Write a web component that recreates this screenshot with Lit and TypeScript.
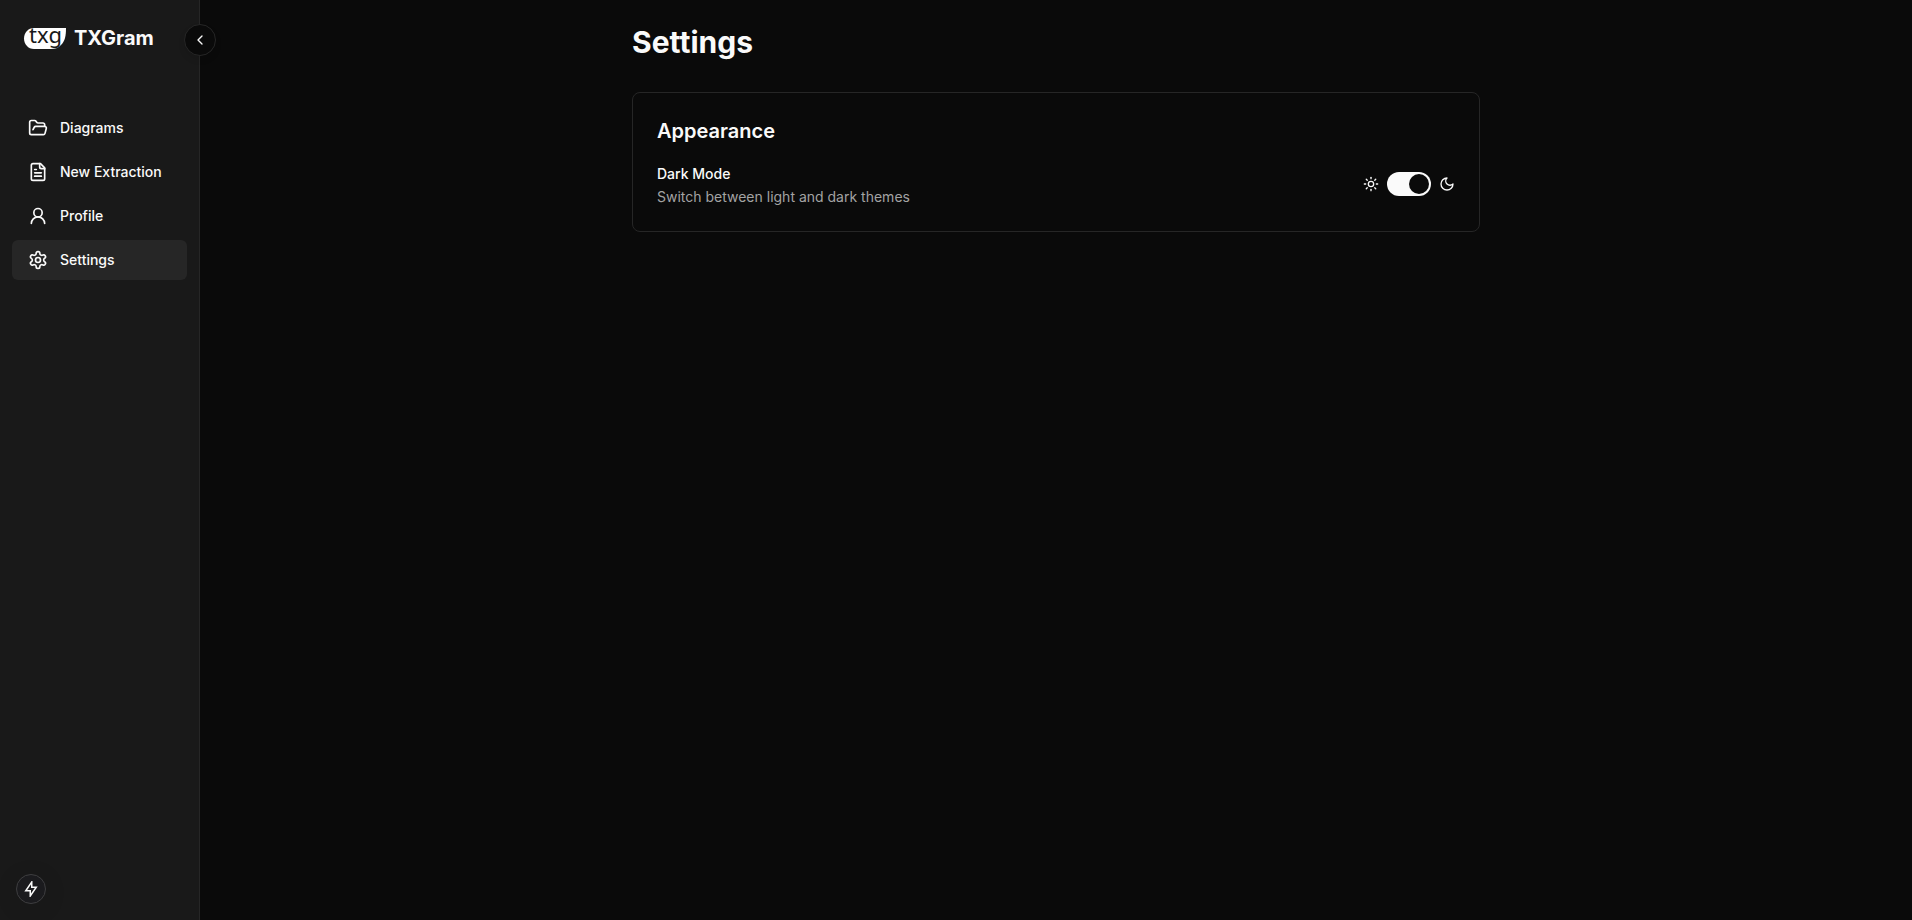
import { LitElement, html, svg, css } from "lit";
import { customElement, state } from "lit/decorators.js";
import { classMap } from "lit/directives/class-map.js";

const icons = {
  folder: svg`<path d="m6 14 1.5-2.9A2 2 0 0 1 9.24 10H20a2 2 0 0 1 1.94 2.5l-1.54 6a2 2 0 0 1-1.95 1.5H4a2 2 0 0 1-2-2V5a2 2 0 0 1 2-2h3.9a2 2 0 0 1 1.69.9l.81 1.2a2 2 0 0 0 1.67.9H18a2 2 0 0 1 2 2v2"/>`,
  file: svg`<path d="M15 2H6a2 2 0 0 0-2 2v16a2 2 0 0 0 2 2h12a2 2 0 0 0 2-2V7Z"/><path d="M14 2v4a2 2 0 0 0 2 2h4"/><path d="M10 9H8"/><path d="M16 13H8"/><path d="M16 17H8"/>`,
  user: svg`<circle cx="12" cy="8" r="5"/><path d="M20 21a8 8 0 0 0-16 0"/>`,
  gear: svg`<path d="M12.22 2h-.44a2 2 0 0 0-2 2v.18a2 2 0 0 1-1 1.73l-.43.25a2 2 0 0 1-2 0l-.15-.08a2 2 0 0 0-2.73.73l-.22.38a2 2 0 0 0 .73 2.73l.15.1a2 2 0 0 1 1 1.72v.51a2 2 0 0 1-1 1.74l-.15.09a2 2 0 0 0-.73 2.73l.22.38a2 2 0 0 0 2.73.73l.15-.08a2 2 0 0 1 2 0l.43.25a2 2 0 0 1 1 1.73V20a2 2 0 0 0 2 2h.44a2 2 0 0 0 2-2v-.18a2 2 0 0 1 1-1.73l.43-.25a2 2 0 0 1 2 0l.15.08a2 2 0 0 0 2.73-.73l.22-.39a2 2 0 0 0-.73-2.73l-.15-.08a2 2 0 0 1-1-1.74v-.5a2 2 0 0 1 1-1.74l.15-.09a2 2 0 0 0 .73-2.73l-.22-.38a2 2 0 0 0-2.73-.73l-.15.08a2 2 0 0 1-2 0l-.43-.25a2 2 0 0 1-1-1.73V4a2 2 0 0 0-2-2z"/><circle cx="12" cy="12" r="3"/>`,
  chevron: svg`<path d="m15 18-6-6 6-6"/>`,
  sun: svg`<circle cx="12" cy="12" r="4"/><path d="M12 2v2"/><path d="M12 20v2"/><path d="m4.93 4.93 1.41 1.41"/><path d="m17.66 17.66 1.41 1.41"/><path d="M2 12h2"/><path d="M20 12h2"/><path d="m6.34 17.66-1.41 1.41"/><path d="m19.07 4.93-1.41 1.41"/>`,
  moon: svg`<path d="M12 3a6 6 0 0 0 9 9 9 9 0 1 1-9-9Z"/>`,
};

const icon = (name: keyof typeof icons, size: number) => html`<svg
  width=${size}
  height=${size}
  viewBox="0 0 24 24"
  fill="none"
  stroke="currentColor"
  stroke-width="2"
  stroke-linecap="round"
  stroke-linejoin="round"
  aria-hidden="true"
>${icons[name]}</svg>`;

const links: { label: string; icon: keyof typeof icons }[] = [
  { label: "Diagrams", icon: "folder" },
  { label: "New Extraction", icon: "file" },
  { label: "Profile", icon: "user" },
  { label: "Settings", icon: "gear" },
];

@customElement("app-sidebar")
export class AppSidebar extends LitElement {
  @state() private current = "Settings";

  static styles = css`
    :host {
      position: relative;
      display: flex;
      flex-direction: column;
      box-sizing: border-box;
      width: 200px;
      flex-shrink: 0;
      background: #191919;
      border-right: 1px solid #262626;
    }
    svg {
      display: block;
      flex-shrink: 0;
    }
    .brand {
      display: flex;
      align-items: center;
      gap: 8px;
      padding: 24px 24px 0;
      height: 28px;
      font-size: 20px;
      line-height: 28px;
      font-weight: 700;
      color: #fafafa;
      text-decoration: none;
    }
    .logo {
      overflow: visible;
    }
    .mark {
      font-family: "Noto Sans", sans-serif;
      font-size: 22px;
      font-weight: 400;
    }
    .nav {
      display: flex;
      flex-direction: column;
      gap: 4px;
      padding: 56px 12px 0;
    }
    .link {
      display: flex;
      align-items: center;
      gap: 12px;
      height: 40px;
      padding: 0 16px;
      border-radius: 6px;
      font-size: 14px;
      line-height: 20px;
      font-weight: 500;
      color: #fafafa;
      text-decoration: none;
    }
    .link.active {
      background: #262626;
    }
    .round {
      display: flex;
      align-items: center;
      justify-content: center;
      box-sizing: border-box;
      padding: 0;
      border-radius: 50%;
      color: #fafafa;
      cursor: pointer;
    }
    .collapse {
      position: absolute;
      top: 24px;
      right: -17px;
      width: 32px;
      height: 32px;
      background: #0a0a0a;
      border: 1px solid #262626;
      box-shadow: 0 4px 6px rgba(0, 0, 0, 0.1);
    }
    .quick {
      width: 30px;
      height: 30px;
      margin: auto 0 16px 16px;
      background: #1b1b1e;
      border: 1px solid #3e3e40;
      box-shadow: 0 4px 24px rgba(0, 0, 0, 0.1);
    }
  `;

  render() {
    return html`
      <a class="brand" href="#home">
        <svg class="logo" width="42" height="21" viewBox="0 0 42 21" role="img" aria-label="txg">
          <path d="M10 0H42C42 8 41 13 37 17C34 20 31 21 27 21H10C4 21 0 16 0 10.500C0 5 4 0 10 0Z" fill="#fff" />
          <text class="mark" x="5" y="15" fill="#191919">txg</text>
        </svg>
        <span>TXGram</span>
      </a>
      <nav class="nav">
        ${links.map(
          (l) => html`<a
            class=${classMap({ link: true, active: l.label === this.current })}
            href="#${l.label.toLowerCase().replace(" ", "-")}"
            @click=${() => (this.current = l.label)}
            >${icon(l.icon, 20)}<span>${l.label}</span></a
          >`
        )}
      </nav>
      <button class="round collapse" aria-label="Collapse sidebar">${icon("chevron", 16)}</button>
      <button class="round quick" aria-label="Quick actions">
        <svg width="16" height="16" viewBox="0 0 16 16" fill="none" stroke="currentColor" stroke-width="1.5" aria-hidden="true">
          <path d="M8.750 1V6.250H13.250L7.250 15V9.750H2.750Z" />
        </svg>
      </button>
    `;
  }
}

@customElement("app-root")
export class AppRoot extends LitElement {
  @state() private dark = true;

  static styles = css`
    :host {
      display: flex;
      min-height: 100vh;
      background: #0a0a0a;
      color: #fafafa;
      font-family: Inter, sans-serif;
    }
    svg {
      display: block;
    }
    .main {
      flex: 1;
      min-width: 0;
    }
    .content {
      box-sizing: border-box;
      max-width: 896px;
      margin: 0 auto;
      padding: 24px;
    }
    .title {
      margin: 0 0 32px;
      font-size: 30px;
      line-height: 36px;
      font-weight: 700;
    }
    .card {
      padding: 24px;
      border: 1px solid #262626;
      border-radius: 8px;
    }
    .heading {
      margin: 0 0 16px;
      font-size: 20px;
      line-height: 28px;
      font-weight: 600;
    }
    .row {
      display: flex;
      align-items: center;
      justify-content: space-between;
    }
    .text {
      display: flex;
      flex-direction: column;
      font-size: 14px;
    }
    .label {
      line-height: 26px;
      font-weight: 500;
    }
    .hint {
      margin: 0;
      line-height: 20px;
      color: #a3a3a3;
    }
    .control {
      display: flex;
      align-items: center;
      gap: 8px;
    }
    .switch {
      appearance: none;
      display: flex;
      box-sizing: border-box;
      width: 44px;
      height: 24px;
      margin: 0;
      padding: 2px;
      border-radius: 12px;
      background: #262626;
      cursor: pointer;
    }
    .switch::before {
      content: "";
      width: 20px;
      height: 20px;
      border-radius: 50%;
      background: #0a0a0a;
    }
    .switch:checked {
      justify-content: flex-end;
      background: #fafafa;
    }
  `;

  render() {
    return html`
      <app-sidebar></app-sidebar>
      <main class="main">
        <div class="content">
          <h1 class="title">Settings</h1>
          <section class="card">
            <h2 class="heading">Appearance</h2>
            <div class="row">
              <div class="text">
                <label class="label" for="dark-mode">Dark Mode</label>
                <p class="hint" id="dark-hint">Switch between light and dark themes</p>
              </div>
              <div class="control">
                ${icon("sun", 16)}
                <input
                  class="switch"
                  id="dark-mode"
                  type="checkbox"
                  role="switch"
                  aria-describedby="dark-hint"
                  .checked=${this.dark}
                  @change=${(e: Event) => (this.dark = (e.target as HTMLInputElement).checked)}
                />
                ${icon("moon", 16)}
              </div>
            </div>
          </section>
        </div>
      </main>
    `;
  }
}
